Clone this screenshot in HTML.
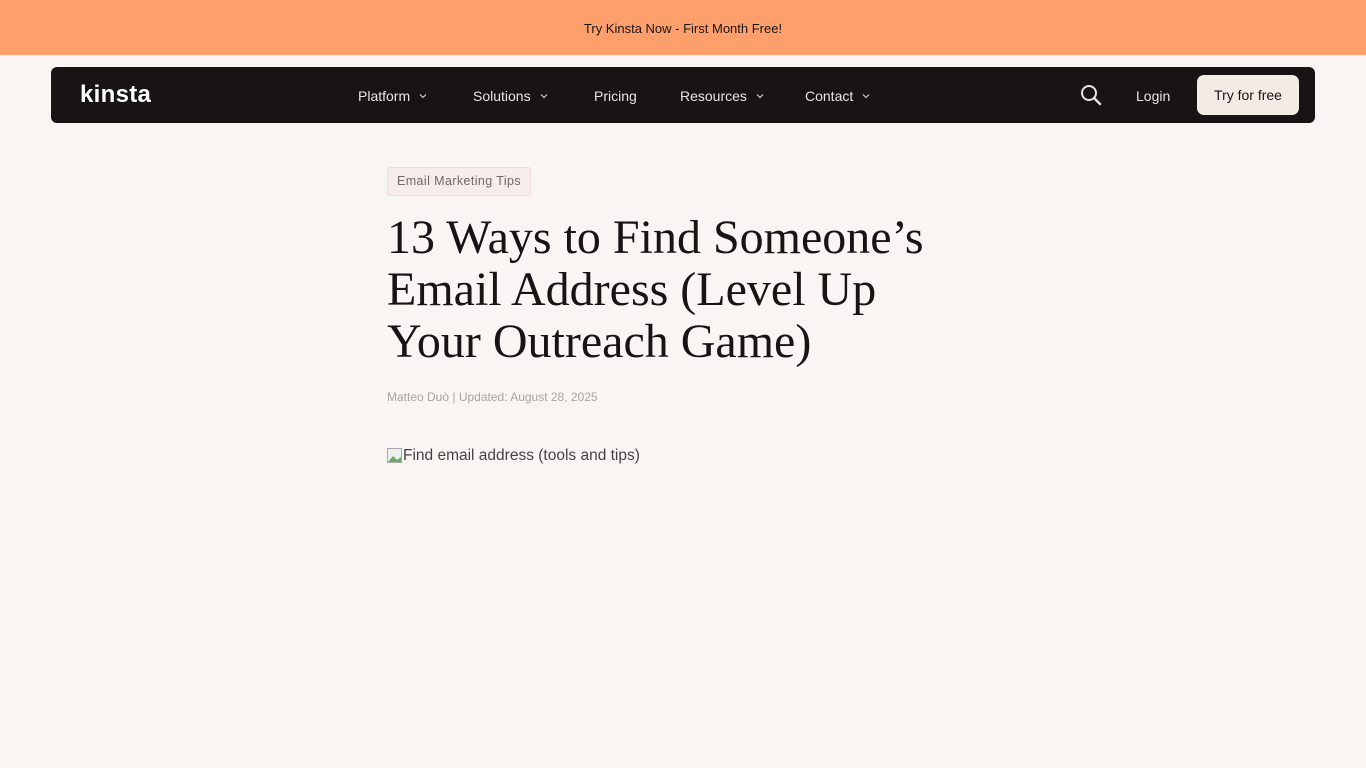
<!DOCTYPE html>
<html><head><meta charset="utf-8">
<style>
*{margin:0;padding:0;box-sizing:border-box}
body{width:1366px;height:768px;background:#f9f5f2;font-family:"Liberation Sans",sans-serif;overflow:hidden;position:relative}
.banner{height:55px;background:#ff9f6b;display:flex;align-items:center;justify-content:center;font-size:13px;color:#1a1617;padding-top:2px}
.nav{position:absolute;left:51px;top:67px;width:1264px;height:56px;background:#181415;border-radius:6px;color:#eee}
.logo{position:absolute;left:29px;top:14px;font-size:24px;font-weight:bold;color:#fff;letter-spacing:0.3px}
.nav .item{position:absolute;top:21px;font-size:14px;color:#e9e4e1}
.chev{display:inline-block;width:8px;height:8px;margin-left:9px;vertical-align:1px}
.try{position:absolute;left:1146px;top:8px;width:102px;height:40px;background:#f3ebe6;border-radius:7px;color:#181415;font-size:14px;display:flex;align-items:center;justify-content:center}
.tag{position:absolute;left:387px;top:167px;height:29px;padding:0 9px;border:1px solid #f0dcd8;background:#f6ecea;border-radius:3px;font-size:12.5px;letter-spacing:0.4px;color:#6e6a6a;line-height:27px}
h1{position:absolute;left:387px;top:212px;width:570px;font-family:"Liberation Serif",serif;font-weight:normal;font-size:48px;line-height:52px;color:#181415}
.meta{position:absolute;left:387px;top:390px;font-size:12px;color:#a9a4a3}
.img{position:absolute;left:387px;top:447px;font-size:15.5px;color:#444;display:flex;align-items:center}
</style></head><body>
<div class="banner">Try Kinsta Now - First Month Free!</div>
<div class="nav">
<div class="logo">kinsta</div>
<div class="item" style="left:307px">Platform<svg class="chev" viewBox="0 0 8 8"><path d="M1 2.5L4 5.5L7 2.5" stroke="#ddd" fill="none" stroke-width="1"/></svg></div>
<div class="item" style="left:422px">Solutions<svg class="chev" viewBox="0 0 8 8"><path d="M1 2.5L4 5.5L7 2.5" stroke="#ddd" fill="none" stroke-width="1"/></svg></div>
<div class="item" style="left:543px">Pricing</div>
<div class="item" style="left:629px">Resources<svg class="chev" viewBox="0 0 8 8"><path d="M1 2.5L4 5.5L7 2.5" stroke="#ddd" fill="none" stroke-width="1"/></svg></div>
<div class="item" style="left:754px">Contact<svg class="chev" viewBox="0 0 8 8"><path d="M1 2.5L4 5.5L7 2.5" stroke="#ddd" fill="none" stroke-width="1"/></svg></div>
<svg style="position:absolute;left:1029px;top:17px" width="22" height="22" viewBox="0 0 22 22"><circle cx="9" cy="9" r="7" stroke="#e9e4e1" stroke-width="2" fill="none"/><path d="M14 14L20 20" stroke="#e9e4e1" stroke-width="2.4" stroke-linecap="round"/></svg>
<div class="item" style="left:1085px">Login</div>
<div class="try">Try for free</div>
</div>
<div class="tag">Email Marketing Tips</div>
<h1>13 Ways to Find Someone’s Email Address (Level Up Your Outreach Game)</h1>
<div class="meta">Matteo Duò | Updated: August 28, 2025</div>
<div class="img"><svg width="16" height="16" viewBox="0 0 16 16"><rect x="0.5" y="0.5" width="14" height="14" fill="#eee" stroke="#aaa"/><path d="M1 14L6 8L10 12L14 9V14Z" fill="#6a6"/></svg>Find email address (tools and tips)</div>
</body></html>
